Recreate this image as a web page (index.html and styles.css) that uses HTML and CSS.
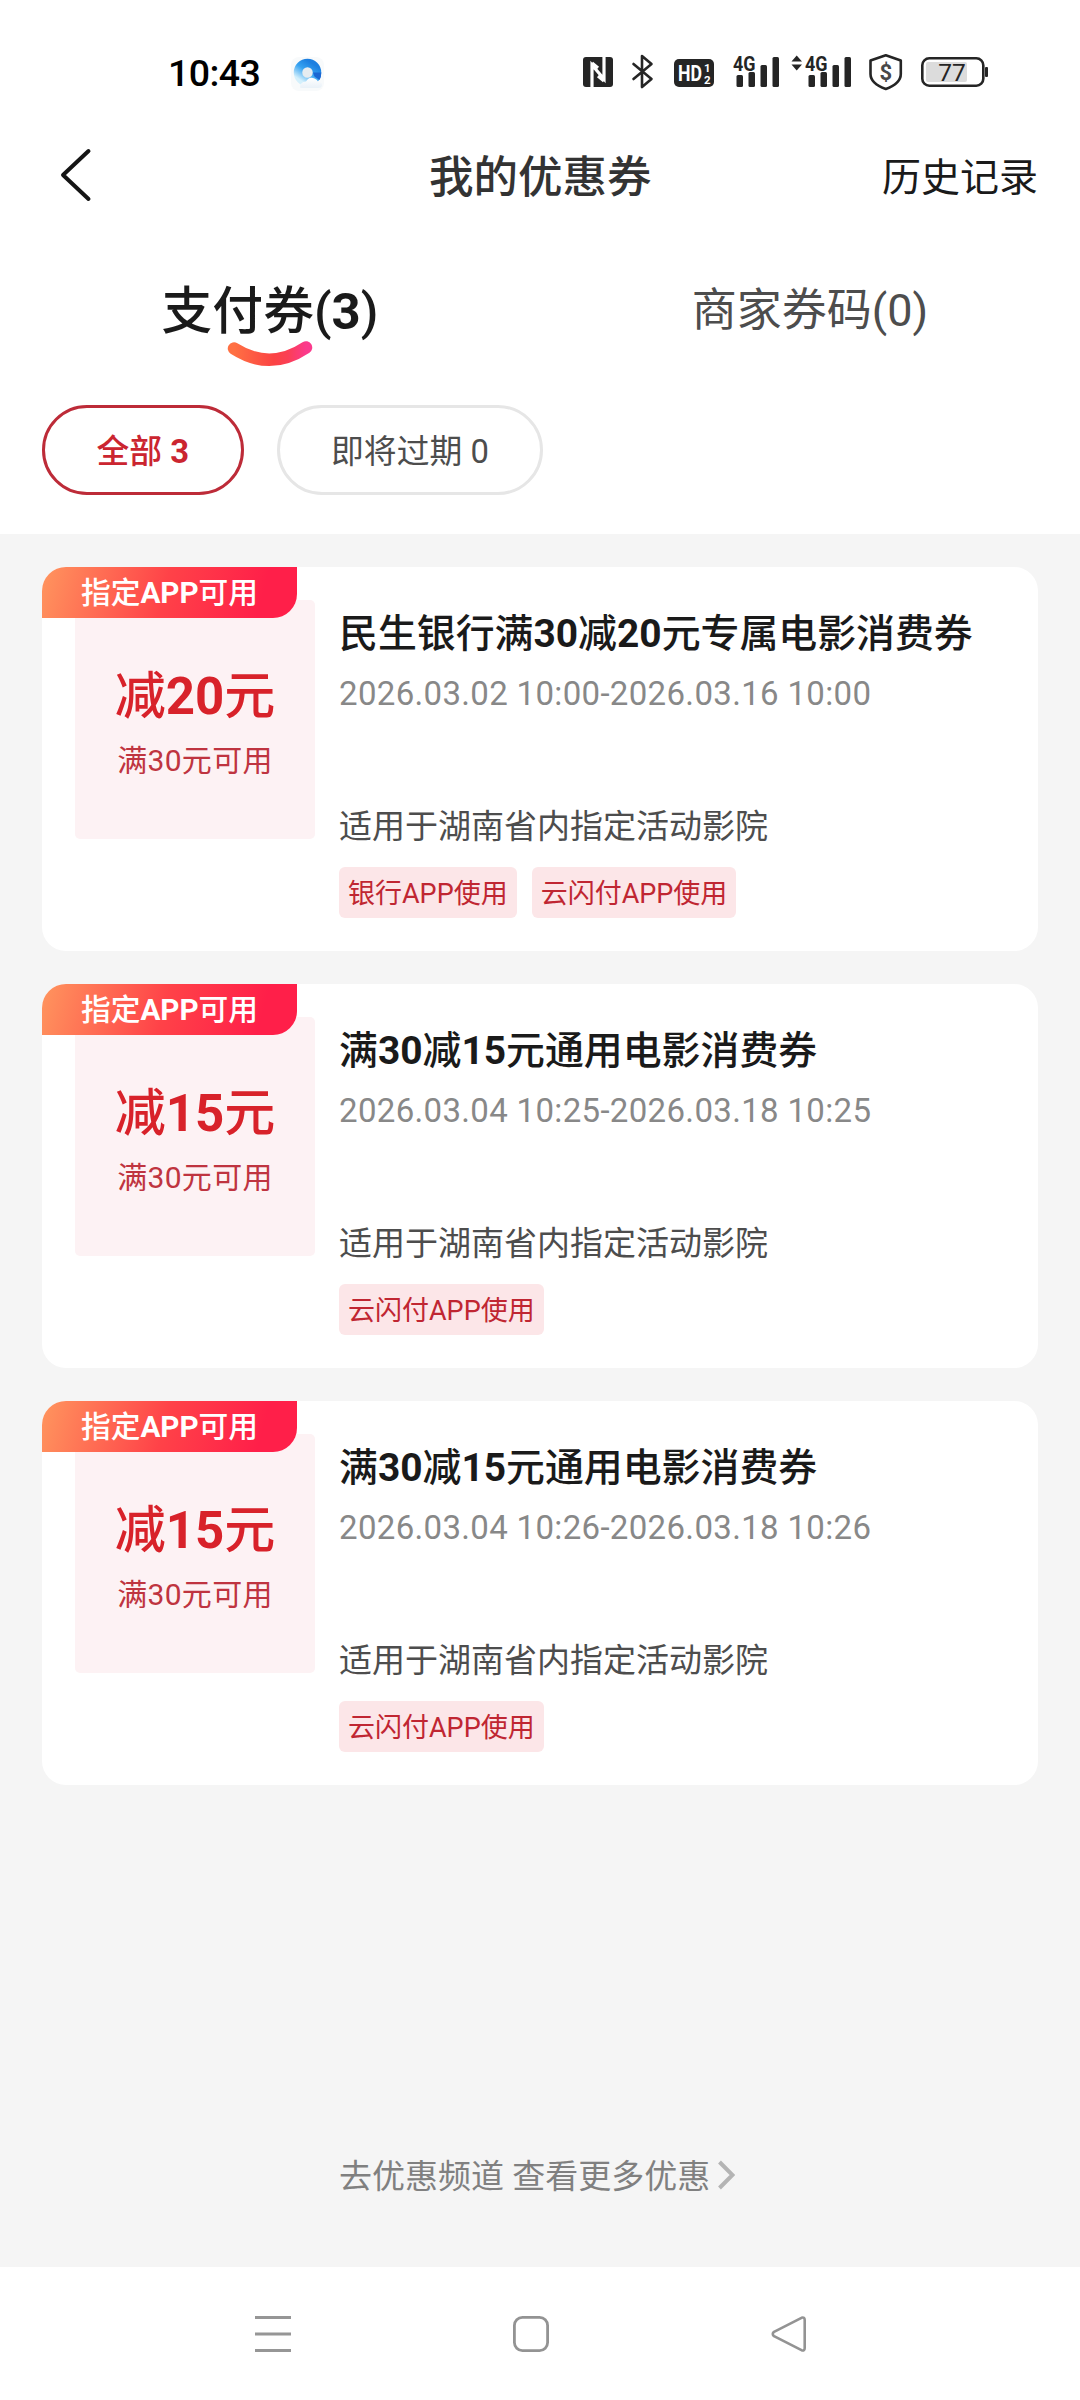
FILE: index.html
```html
<!DOCTYPE html>
<html lang="zh-CN">
<head>
<meta charset="utf-8">
<title>我的优惠券</title>
<link rel="stylesheet" href="styles.css">
</head>
<body>
<div class="screen">
  <header class="status">
    <span class="clock">10:43</span>
    <svg class="browser-icon" width="36" height="40" viewBox="0 0 36 40">
      <defs>
        <linearGradient id="ring" x1="0.8" y1="0.05" x2="0.2" y2="0.95">
          <stop offset="0" stop-color="#1c7fe0"/><stop offset="0.45" stop-color="#35a2f1"/><stop offset="1" stop-color="#d4f0fc"/>
        </linearGradient>
        <linearGradient id="cloud" x1="0" y1="0" x2="0" y2="1">
          <stop offset="0" stop-color="#ffffff"/><stop offset="1" stop-color="#e9f1f8"/>
        </linearGradient>
      </defs>
      <rect x="2" y="5" width="33" height="34" rx="8" fill="#f8fafb"/>
      <circle cx="18.500" cy="20.500" r="9.500" fill="#e6ecf0" stroke="url(#ring)" stroke-width="8.500"/>
      <path d="M24 20.500H32.300Q32.300 25 30.500 28L25.500 24.500Z" fill="#1a66d2"/>
      <path d="M11 35.500Q11 30 17 29.500Q20 24 25.500 26.500Q28 27.500 29 29.500Q33.500 30 33 33.500Q32.500 36 29 36H13Z" fill="url(#cloud)"/>
    </svg>
    <svg class="system-icons" width="410" height="40" viewBox="580 52 410 40">
      <g fill="#252525">
        <rect x="583" y="57" width="30" height="30" rx="3"/>
        <path d="M592 87V65L604 79V57" fill="none" stroke="#fff" stroke-width="3.200"/>
        <path d="M592 63L598 68M604 81L598 76" fill="none" stroke="#fff" stroke-width="3.200"/>
        <path d="M633.500 64L651.500 79L642 87V56L651.500 64L633.500 79" fill="none" stroke="#252525" stroke-width="2.600" stroke-linejoin="round" stroke-linecap="round"/>
        <rect x="674" y="59" width="40" height="28" rx="5"/>
        <rect x="736.500" y="75" width="6.500" height="12" rx="1.500"/>
        <rect x="748.500" y="72" width="6.500" height="15" rx="1.500"/>
        <rect x="760.500" y="65" width="6.500" height="22" rx="1.500"/>
        <rect x="772.500" y="57" width="6.500" height="30" rx="1.500"/>
        <path d="M791.500 61.500L796.700 55.500L802 61.500ZM791.500 64.500L796.700 70.500L802 64.500Z"/>
        <rect x="808.500" y="75" width="6.500" height="12" rx="1.500"/>
        <rect x="820.500" y="72" width="6.500" height="15" rx="1.500"/>
        <rect x="832.500" y="65" width="6.500" height="22" rx="1.500"/>
        <rect x="844.500" y="57" width="6.500" height="30" rx="1.500"/>
        <rect x="985" y="67" width="3" height="10" rx="1"/>
      </g>
      <path d="M885.800 55.300L900.800 60.500V74Q900.800 83.500 885.800 89Q870.500 83.500 870.500 74V60.500Z" fill="none" stroke="#252525" stroke-width="2.600" stroke-linejoin="round"/>
      <rect x="926" y="62" width="41" height="20" rx="2" fill="#dcdcdc"/>
      <rect x="922.300" y="58.300" width="61" height="27.400" rx="7" fill="none" stroke="#252525" stroke-width="2.600"/>
      <g class="glyph">
        <text x="678" y="81" font-size="22.500" font-weight="700" fill="#fff" textLength="24" lengthAdjust="spacingAndGlyphs">HD</text>
        <text x="704" y="71.500" font-size="11.500" font-weight="700" fill="#fff">1</text>
        <text x="704" y="83.500" font-size="11.500" font-weight="700" fill="#fff">2</text>
        <text x="733" y="70.500" font-size="21" font-weight="700" fill="#252525" stroke="#fff" stroke-width="2" paint-order="stroke" textLength="22.500" lengthAdjust="spacingAndGlyphs">4G</text>
        <text x="805" y="70.500" font-size="21" font-weight="700" fill="#252525" stroke="#fff" stroke-width="2" paint-order="stroke" textLength="22.500" lengthAdjust="spacingAndGlyphs">4G</text>
        <text x="885.800" y="80" font-size="22" font-weight="700" fill="#484848" text-anchor="middle">$</text>
        <text x="952" y="81" font-size="24.500" fill="#252525" text-anchor="middle">77</text>
      </g>
    </svg>
  </header>

  <nav class="titlebar">
    <svg class="back" width="32" height="54" viewBox="0 0 32 54"><path d="M28.500 3L3 27L28.500 51" fill="none" stroke="#151515" stroke-width="4" stroke-linecap="round" stroke-linejoin="round"/></svg>
    <h1 class="page-title">我的优惠券</h1>
    <a class="history">历史记录</a>
  </nav>

  <div class="tabs">
    <div class="tab tab-active">支付券(<b>3</b>)
      <svg class="smile" width="86" height="26" viewBox="0 0 86 26">
        <defs><linearGradient id="smile" x1="0" y1="0" x2="1" y2="0"><stop offset="0" stop-color="#ff7043"/><stop offset="0.55" stop-color="#fb4343"/><stop offset="0.75" stop-color="#fb3f55"/><stop offset="1" stop-color="#fb3a8c"/></linearGradient></defs>
        <path d="M7 7.500Q43 30.500 79 6.500" fill="none" stroke="url(#smile)" stroke-width="12.500" stroke-linecap="round"/>
      </svg>
    </div>
    <div class="tab">商家券码(0)</div>
  </div>

  <div class="filters">
    <span class="pill pill-active">全部 <b>3</b></span>
    <span class="pill">即将过期 0</span>
  </div>

  <main class="list">
    <article class="card">
      <span class="badge">指定<b>APP</b>可用</span>
      <div class="value"><strong class="amount">减<b>20</b>元</strong><span class="condition">满30元可用</span></div>
      <div class="info">
        <h2 class="name">民生银行满<b>30</b>减<b>20</b>元专属电影消费券</h2>
        <p class="dates">2026.03.02 10:00-2026.03.16 10:00</p>
        <p class="scope">适用于湖南省内指定活动影院</p>
        <div class="tags"><span class="tag">银行APP使用</span><span class="tag">云闪付APP使用</span></div>
      </div>
    </article>
    <article class="card">
      <span class="badge">指定<b>APP</b>可用</span>
      <div class="value"><strong class="amount">减<b>15</b>元</strong><span class="condition">满30元可用</span></div>
      <div class="info">
        <h2 class="name">满<b>30</b>减<b>15</b>元通用电影消费券</h2>
        <p class="dates">2026.03.04 10:25-2026.03.18 10:25</p>
        <p class="scope">适用于湖南省内指定活动影院</p>
        <div class="tags"><span class="tag">云闪付APP使用</span></div>
      </div>
    </article>
    <article class="card">
      <span class="badge">指定<b>APP</b>可用</span>
      <div class="value"><strong class="amount">减<b>15</b>元</strong><span class="condition">满30元可用</span></div>
      <div class="info">
        <h2 class="name">满<b>30</b>减<b>15</b>元通用电影消费券</h2>
        <p class="dates">2026.03.04 10:26-2026.03.18 10:26</p>
        <p class="scope">适用于湖南省内指定活动影院</p>
        <div class="tags"><span class="tag">云闪付APP使用</span></div>
      </div>
    </article>
    <a class="more">去优惠频道 查看更多优惠
      <svg width="18" height="30" viewBox="0 0 18 30"><path d="M2.500 2L15.500 15L2.500 28" fill="none" stroke="#b4b4b4" stroke-width="4"/></svg>
    </a>
  </main>

  <footer class="navbar">
    <svg width="36" height="36" viewBox="0 0 36 36"><path d="M0 1.500H36M0 18H36M0 34.500H36" stroke="#969696" stroke-width="3"/></svg>
    <svg width="36" height="36" viewBox="0 0 36 36"><rect x="1.400" y="1.400" width="33.200" height="33.200" rx="8" fill="none" stroke="#939393" stroke-width="2.800"/></svg>
    <svg width="36" height="36" viewBox="0 0 36 36"><path d="M3 15.800L30.500 1.800Q33.700 0.800 33.700 4V32Q33.700 35.200 30.500 34.200L3 20.200Q0.500 18 3 15.800Z" fill="none" stroke="#939393" stroke-width="2.600" stroke-linejoin="round"/></svg>
  </footer>
</div>
</body>
</html>
```
FILE: styles.css
```css
* { box-sizing: border-box; }

body {
  margin: 0;
  background: #fff;
  color: #1a1a1a;
  font-family: Roboto, "Noto Sans CJK SC", sans-serif;
}

h1, h2, p { margin: 0; font-weight: 400; }

svg { display: block; flex: none; }

.screen {
  width: 1080px;
  height: 2400px;
  display: flex;
  flex-direction: column;
  overflow: hidden;
}

.status {
  height: 132px;
  padding: 12px 90px 0 168px;
  display: flex;
  align-items: center;
}

.clock {
  width: 121px;
  padding-top: 2px;
  font-size: 37.5px;
  font-weight: 500;
  letter-spacing: -0.6px;
  color: #000;
}

.system-icons { margin-left: auto; }

.glyph { font-family: Roboto, sans-serif; }

.titlebar {
  height: 88px;
  padding: 0 42px 0 60px;
  display: flex;
  align-items: center;
}

.back { margin-top: -2px; }

.page-title {
  margin-left: 337px;
  padding-top: 3px;
  font-size: 44.5px;
  font-weight: 500;
  line-height: 60px;
  color: #333;
}

.history {
  margin-left: auto;
  padding-top: 3px;
  font-size: 39px;
  line-height: 60px;
}

.tabs {
  height: 185px;
  display: flex;
  padding-top: 56px;
}

.tab {
  position: relative;
  flex: 1;
  text-align: center;
  font-size: 45px;
  line-height: 70px;
  color: #4d4d4d;
}

.tab-active {
  font-size: 50.8px;
  font-weight: 500;
  line-height: 72px;
  color: #1a1a1a;
}

.smile {
  position: absolute;
  left: 227px;
  top: 65px;
}

.filters {
  height: 129px;
  padding: 0 42px;
  display: flex;
  align-items: flex-start;
  gap: 33px;
}

.pill {
  height: 90px;
  padding: 0 51.5px;
  border: 3px solid #e6e6e6;
  border-radius: 45px;
  font-size: 32.8px;
  line-height: 88px;
  color: #4d4d4d;
}

.pill-active {
  border-color: #bd2b38;
  color: #cb2530;
  font-weight: 500;
}

.list {
  height: 1733px;
  padding: 33px 42px 0;
  background: #f5f5f5;
  display: flex;
  flex-direction: column;
  gap: 33px;
}

.card {
  position: relative;
  height: 384px;
  padding: 33px 33px 0;
  border-radius: 24px;
  background: #fff;
  display: flex;
  gap: 24px;
}

.badge {
  position: absolute;
  left: 0;
  top: 0;
  width: 255px;
  height: 51px;
  border-radius: 24px 0 24px 0;
  background: linear-gradient(105deg, #ff955e 0%, #ff4248 48%, #ff1f49 85%);
  color: #fff;
  font-size: 29.7px;
  font-weight: 500;
  line-height: 52px;
  text-align: center;
}

.value {
  width: 240px;
  height: 239px;
  padding-top: 62px;
  border-radius: 5px;
  background: #fdf2f4;
  display: flex;
  flex-direction: column;
  align-items: center;
}

.amount {
  font-size: 51px;
  font-weight: 500;
  line-height: 70px;
  color: #d8222a;
}

.condition {
  margin-top: 9px;
  font-size: 30px;
  line-height: 40px;
  letter-spacing: 0.3px;
  color: #bf3440;
}

.info { padding-top: 7px; }

.name {
  font-size: 38.9px;
  font-weight: 500;
  line-height: 54px;
}

.dates {
  margin-top: 10px;
  font-size: 33px;
  line-height: 46px;
  letter-spacing: 0.33px;
  color: #888;
}

.scope {
  margin-top: 87px;
  font-size: 33px;
  line-height: 46px;
  color: #4d4d4d;
}

.tags {
  margin-top: 17px;
  display: flex;
  gap: 15px;
}

.tag {
  height: 51px;
  padding: 0 9px;
  border-radius: 6px;
  background: #fce6e8;
  font-size: 27px;
  line-height: 54px;
  color: #c02632;
}

.more {
  margin-top: 336px;
  padding-left: 297px;
  display: flex;
  align-items: center;
  gap: 7px;
  font-size: 33px;
  line-height: 46px;
  color: #808080;
}

.more svg { margin-top: -4px; }

.navbar {
  height: 133px;
  padding: 0 273px 0 255px;
  display: flex;
  justify-content: space-between;
  align-items: center;
}
```
